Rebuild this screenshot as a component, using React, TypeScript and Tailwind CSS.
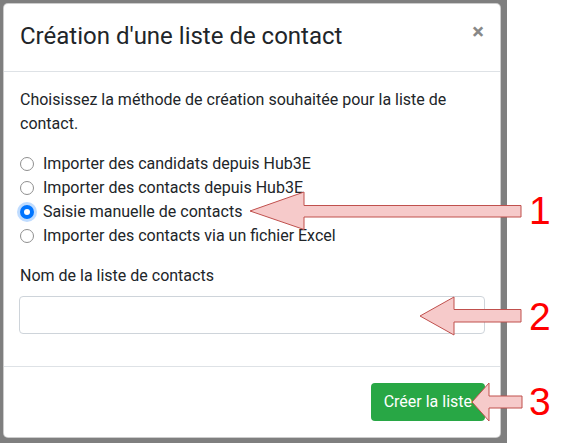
import React from 'react';

const options = [
  'Importer des candidats depuis Hub3E',
  'Importer des contacts depuis Hub3E',
  'Saisie manuelle de contacts',
  'Importer des contacts via un fichier Excel',
];

const Radio = ({ checked }: { checked: boolean }) =>
  checked ? (
    <span className="w-[14px] h-[14px] rounded-full bg-[#0075ff] flex items-center justify-center shadow-[0_0_0_3px_rgba(0,117,255,0.25)]">
      <span className="w-[6px] h-[6px] rounded-full bg-white" />
    </span>
  ) : (
    <span className="w-[14px] h-[14px] rounded-full border border-[#8f8f8f] bg-white" />
  );

export default function App() {
  const selected = 2;

  return (
    <div className="relative w-[561px] h-[443px] bg-white overflow-hidden font-['Roboto',sans-serif] text-[#212529]">
      <div className="w-[507px] h-full bg-[#7f7f7f] pt-[3px] pl-[3px]">
        <div className="w-[498px] bg-white rounded-[5px] border border-black/20">
          <div className="flex items-start justify-between px-4 pt-[15px] pb-[18px] border-b border-[#dee2e6]">
            <h4 className="text-[24px] leading-[34px]">Création d'une liste de contact</h4>
            <span className="text-[#888] font-bold text-[22px] leading-[24px] mt-[1px]">×</span>
          </div>

          <div className="px-4 pt-4 pb-4 text-[16px] leading-[24px]">
            <p className="mb-4">Choisissez la méthode de création souhaitée pour la liste de contact.</p>
            <div className="flex flex-col">
              {options.map((o, i) => (
                <label key={o} className="flex items-center h-[24px] gap-[9px]">
                  <Radio checked={i === selected} />
                  <span>{o}</span>
                </label>
              ))}
            </div>
            <div className="mt-4 mb-4">
              <div className="mb-2">Nom de la liste de contacts</div>
              <div className="h-[38px] rounded-[4px] border border-[#ced4da] bg-white -mx-[1px]" />
            </div>
          </div>

          <div className="flex justify-end p-4 border-t border-[#dee2e6]">
            <button className="h-[38px] px-[13px] rounded-[4px] bg-[#28a745] text-white text-[16px] -mr-[1px]">
              Créer la liste
            </button>
          </div>
        </div>
      </div>

      {/* annotations */}
      <svg className="absolute inset-0 pointer-events-none" width="561" height="443">
        <polygon
          points="250,211 304,192 304,205.5 521,205.5 521,217 304,217 304,229.5"
          fill="#f6caca"
          stroke="#c0504d"
          strokeWidth="1"
        />
        <polygon
          points="420,316 454,297 454,309.5 521,309.5 521,322 454,322 454,335"
          fill="#f6caca"
          stroke="#c0504d"
          strokeWidth="1"
        />
        <polygon
          points="472,402 489,383 489,396 522,396 522,408 489,408 489,421"
          fill="#f6caca"
          stroke="#c0504d"
          strokeWidth="1"
        />
      </svg>
      <span className="absolute left-[529px] top-[189px] text-[39px] leading-[44px] text-[#ff0000] font-['Liberation_Sans',sans-serif]">1</span>
      <span className="absolute left-[529px] top-[295px] text-[39px] leading-[44px] text-[#ff0000] font-['Liberation_Sans',sans-serif]">2</span>
      <span className="absolute left-[529px] top-[380px] text-[39px] leading-[44px] text-[#ff0000] font-['Liberation_Sans',sans-serif]">3</span>
    </div>
  );
}
